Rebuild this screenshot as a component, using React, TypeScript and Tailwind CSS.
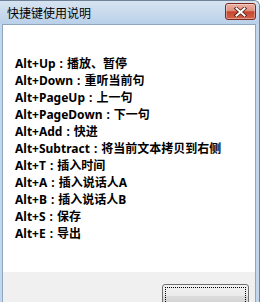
import React from 'react';

const shortcuts: [string, string][] = [
  ['Alt+Up', '播放、暂停'],
  ['Alt+Down', '重听当前句'],
  ['Alt+PageUp', '上一句'],
  ['Alt+PageDown', '下一句'],
  ['Alt+Add', '快进'],
  ['Alt+Subtract', '将当前文本拷贝到右侧'],
  ['Alt+T', '插入时间'],
  ['Alt+A', '插入说话人A'],
  ['Alt+B', '插入说话人B'],
  ['Alt+S', '保存'],
  ['Alt+E', '导出'],
];

function CloseButton() {
  return (
    <div className="w-[31px] h-[17px] mt-[2px] rounded-[3px] border border-[#7a2a1c] bg-[linear-gradient(to_bottom,#ebb2a4_0%,#de8f7e_45%,#c6452c_52%,#d3654c_100%)] flex items-center justify-center shadow-[inset_0_0_0_1px_rgba(255,255,255,0.35)]">
      <svg width="13" height="10" viewBox="0 0 13 10">
        <path d="M2.5 1.5 L10.5 8.5 M10.5 1.5 L2.5 8.5" stroke="#4a1c14" strokeWidth="3.6" strokeLinecap="square" fill="none" />
        <path d="M2.5 1.5 L10.5 8.5 M10.5 1.5 L2.5 8.5" stroke="#ffffff" strokeWidth="2" strokeLinecap="square" fill="none" />
      </svg>
    </div>
  );
}

export default function App() {
  return (
    <div className="w-[260px] h-[302px] overflow-hidden bg-white font-['Noto_Sans','Noto_Sans_CJK_SC',sans-serif]">
      <div className="w-[260px] h-full flex flex-col bg-[#c3d7ec] border-t border-r border-[#6e8299] rounded-tr-[6px]">
        {/* タイトルバー */}
        <div className="h-[23px] shrink-0 flex items-start justify-between pl-[7px] pr-[3px] rounded-tr-[5px] bg-[linear-gradient(to_bottom,#d6e3f1_0%,#c9daed_50%,#b9d0ea_100%)]">
          <span className="mt-[4px] text-[12px] leading-[16px] text-black font-['Noto_Sans_CJK_SC',sans-serif]">
            快捷键使用说明
          </span>
          <CloseButton />
        </div>
        <div className="flex-1 flex pl-[2px] pr-[3px] min-h-0">
          <div className="flex-1 flex flex-col border-l border-r border-t border-[#8ea6c0] bg-white">
            <div className="h-[247px] shrink-0 pt-[30px] pl-[12px] text-[12px] leading-[17px] font-bold text-black">
              {shortcuts.map(([key, desc]) => (
                <div key={key} className="whitespace-nowrap">
                  {key}
                  <span className="mx-[4px]">:</span>
                  {desc}
                </div>
              ))}
            </div>
            <div className="flex-1 bg-[#f0f0f0] flex justify-end pt-[12px] pr-[6px]">
              <div className="w-[87px] h-[23px] rounded-[3px] border border-[#707070] bg-[linear-gradient(to_bottom,#f2f2f2_0%,#ebebeb_50%,#dddddd_51%,#cfcfcf_100%)] p-[2px]">
                <div className="w-full h-full border border-dotted border-black" />
              </div>
            </div>
          </div>
        </div>
      </div>
    </div>
  );
}
